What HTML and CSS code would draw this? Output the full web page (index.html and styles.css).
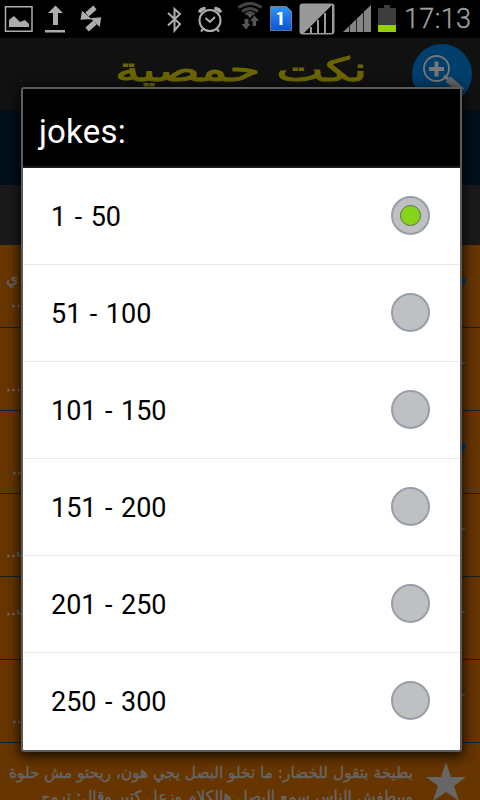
FILE: index.html
```html
<!DOCTYPE html>
<html lang="ar">
<head>
<meta charset="utf-8">
<title>نكت حمصية</title>
<link rel="stylesheet" href="styles.css">
</head>
<body>
<div class="screen">
  <header class="status">
    <svg width="480" height="38" viewBox="0 0 480 38">
      <g fill="#acaeac">
        <path fill="none" stroke="#acaeac" stroke-width="1.5" d="M5.500 6.800h26.500v24.500h-26.500z"/>
        <path d="M9 27v-7l5-4 6 6 5-2 4 4v3z"/>
        <path d="M55.500 5.500l7.500 7.500h-5v12h-5v-12h-5zM45 30h20v2.500h-20z"/>
        <path stroke="#acaeac" stroke-width="5" d="M95 7.500l-8 7M87 29.500l8-7"/>
        <path d="M80.500 19.800l1.500-9 9.500 8.200zM101.200 17.200l-10.700 1 9.200 8.800z"/>
        <path fill="none" stroke="#acaeac" stroke-width="2" d="M168 13l12 11-5.500 6.500V9l5.500 5-12 11.500"/>
        <circle cx="210" cy="20.500" r="10.500" fill="none" stroke="#acaeac" stroke-width="2"/>
        <path fill="none" stroke="#acaeac" stroke-width="2" d="M205.500 18l4.500 4 5-5M204 28l-3 3.500M216 28l3 3.500"/>
        <path fill="none" stroke="#acaeac" stroke-width="3.500" d="M199.500 12.500q1-3.500 6-4M220.500 12.500q-1-3.500-6-4"/>
      </g>
      <g fill="none" stroke="#444" stroke-width="3">
        <path d="M238.500 7.500q11.500-8 23 0M242 11.500q8-6 16 0M245.500 14.500q4.500-4 9 0"/>
      </g>
      <path fill="#555" d="M247 14.500l3-1.500 3 1.500-3 3.500zM244.500 19h4v5h2l-4.500 5.500-4.500-5.500h3zM252.500 26v-5h-2.500l4.500-5.500 4.500 5.500h-3v5z"/>
      <defs><linearGradient id="sim" x2="0" y2="1"><stop stop-color="#2c96f2"/><stop offset="1" stop-color="#0b50dc"/></linearGradient></defs>
      <path fill="url(#sim)" stroke="#999" stroke-width=".7" d="M270.500 6.500h16l5 5v19h-21z"/>
      <path fill="#fff" d="M277 13l3.500-1h2v13h-3V14.500h-2.500z"/>
      <rect x="299.500" y="3.500" width="35" height="31" rx="3" fill="#999"/>
      <path fill="#000" d="M332 5v28h-28z"/>
      <path fill="#999" d="M310 27h2v6h-2zM317 20h2v13h-2zM324 13h2v20h-2z"/>
      <path fill="#858585" d="M343 32l28-27v27z"/>
      <path stroke="#222" d="M349.500 25v7M356.500 18v14M363.500 11v21"/>
      <path fill="#3c3c3c" d="M378 8h6V5h6v3h6v17h-18z"/>
      <path fill="#94cf00" d="M378 25h18v7h-18z"/>
      <text class="clock" x="404" y="28" textLength="67">17:13</text>
    </svg>
  </header>
  <div class="titlebar">
    <svg width="480" height="72" viewBox="0 38 480 72">
      <text class="title" transform="translate(241 81) scale(1.500 1)" text-anchor="middle" direction="rtl" textLength="168" lengthAdjust="spacingAndGlyphs">نكت حمصية</text>
      <circle cx="442" cy="74" r="30" fill="#003e6b"/>
      <circle cx="436.500" cy="68.500" r="12.500" fill="none" stroke="#777" stroke-width="1.800"/>
      <path stroke="#777" stroke-width="4" d="M429 69h15M436.500 61.500v15"/>
      <path stroke="#666" stroke-width="7" d="M448 79l14 12"/>
      <path stroke="#777" stroke-width="3" d="M444 76l4 3"/>
    </svg>
  </div>
  <div class="band"></div>
  <div class="subband"></div>
  <main class="jokes">
    <article class="joke"><p class="end first">ي<br>&nbsp;...</p><svg class="mark" viewBox="0 0 40 40"><path d="M0 14h40v4l-5 5H0z"/></svg></article>
    <article class="joke"><p class="end low">...</p><svg class="star" viewBox="0 0 40 40"><path d="M20 0l5 15h15L28 24l5 15-13-9-13 9 5-15L0 15h15z"/></svg></article>
    <article class="joke"><p class="end low inset">...</p><svg class="mark" viewBox="0 0 40 40"><path d="M0 14h40v4l-5 5H0z"/></svg></article>
    <article class="joke"><p class="end low" dir="rtl">ب..</p><svg class="star" viewBox="0 0 40 40"><path d="M20 0l5 15h15L28 24l5 15-13-9-13 9 5-15L0 15h15z"/></svg></article>
    <article class="joke"><p class="end mid" dir="rtl">ب..</p><svg class="star" viewBox="0 0 40 40"><path d="M20 0l5 15h15L28 24l5 15-13-9-13 9 5-15L0 15h15z"/></svg></article>
    <article class="joke"><p class="end low inset">...</p><svg class="star" viewBox="0 0 40 40"><path d="M20 0l5 15h15L28 24l5 15-13-9-13 9 5-15L0 15h15z"/></svg></article>
    <article class="joke">
      <svg class="copy" width="426" height="57" viewBox="0 743 426 57" direction="rtl">
        <text x="413" y="778" textLength="404" lengthAdjust="spacingAndGlyphs">بطيخة بتقول للخضار: ما تخلو البصل يجي هون، ريحتو مش حلوة</text>
        <text x="413" y="802" textLength="372" lengthAdjust="spacingAndGlyphs">وبيطفش الناس سمع البصل هالكلام وزعل كتير وقال: تروح</text>
      </svg>
      <svg class="star" viewBox="0 0 40 40"><path d="M20 0l5 15h15L28 24l5 15-13-9-13 9 5-15L0 15h15z"/></svg>
    </article>
  </main>
  <section class="dialog">
    <h1><span>jokes:</span></h1>
    <ul>
      <li><span>1 - 50</span><i class="radio on"></i></li>
      <li><span>51 - 100</span><i class="radio"></i></li>
      <li><span>101 - 150</span><i class="radio"></i></li>
      <li><span>151 - 200</span><i class="radio"></i></li>
      <li><span>201 - 250</span><i class="radio"></i></li>
      <li><span>250 - 300</span><i class="radio"></i></li>
    </ul>
  </section>
</div>
</body>
</html>
```

FILE: styles.css
```css
* { box-sizing: border-box; margin: 0; padding: 0; }
body { background: #000; overflow: hidden; }
svg { display: block; }
.screen { position: relative; width: 480px; height: 800px; overflow: hidden; font-family: Roboto, "DejaVu Sans", sans-serif; }
.status { height: 38px; background: #000; }
.clock { font: 300 27px Roboto, sans-serif; fill: #a0a0a0; stroke: #a0a0a0; stroke-width: .3px; }
.titlebar { height: 72px; background: #111; }
.title { font: 33px "DejaVu Sans", sans-serif; fill: #6b6500; stroke: #6b6500; stroke-width: 1px; }
.band { height: 75px; background: #000e1c; }
.subband { height: 60px; background: #1a1a1a; }
.jokes { background: #663500; }
.joke { height: 83px; border-bottom: 1px solid #0c2531; display: flex; justify-content: space-between; padding-right: 14px; overflow: hidden; }
.joke:last-child { border: 0; }
.end { font: 16px/24px "DejaVu Sans", sans-serif; color: #666; padding: 21px 0 0 6px; white-space: nowrap; -webkit-text-stroke: .5px #666; }
.end.low { padding-top: 46px; }
.end.mid { padding-top: 21px; }
.end.inset { padding-left: 12px; }
.star, .mark { width: 40px; height: 40px; margin-top: 19px; fill: #666; flex: none; }
.mark { fill: #003e6b; }
.copy text { font: 16px "DejaVu Sans", sans-serif; fill: #666; stroke: #666; stroke-width: .4px; }
.dialog { position: absolute; left: 21px; top: 87px; width: 441px; height: 665px; border: 2px solid #5c5c5c; border-radius: 3px; background: #fff; box-shadow: 0 3px 12px 2px rgba(0,0,0,.75); }
.dialog h1 { height: 79px; background: #000; border-bottom: 2px solid #1a1a1a; color: #fff; font-weight: 400; font-size: 33px; line-height: 85px; padding-left: 16px; letter-spacing: .2px; }
.dialog ul { list-style: none; }
.dialog li { height: 97px; margin-right: 1px; margin-left: 1px; padding: 0 29px 0 27px; border-bottom: 1px solid #e8e8e8; display: flex; align-items: center; justify-content: space-between; font-size: 27px; word-spacing: 1.8px; color: #000; }
.dialog li:last-child { border-color: transparent; }
.dialog li span { padding-top: 2px; }
.radio { width: 39px; height: 39px; margin-bottom: 2px; border-radius: 50%; background: #bfc0c2; border: 2px solid #989fa8; display: flex; align-items: center; justify-content: center; }
.radio.on::after { content: ""; width: 19px; height: 19px; border-radius: 50%; background: #87d51b; border: 1px solid #557044; }
```
